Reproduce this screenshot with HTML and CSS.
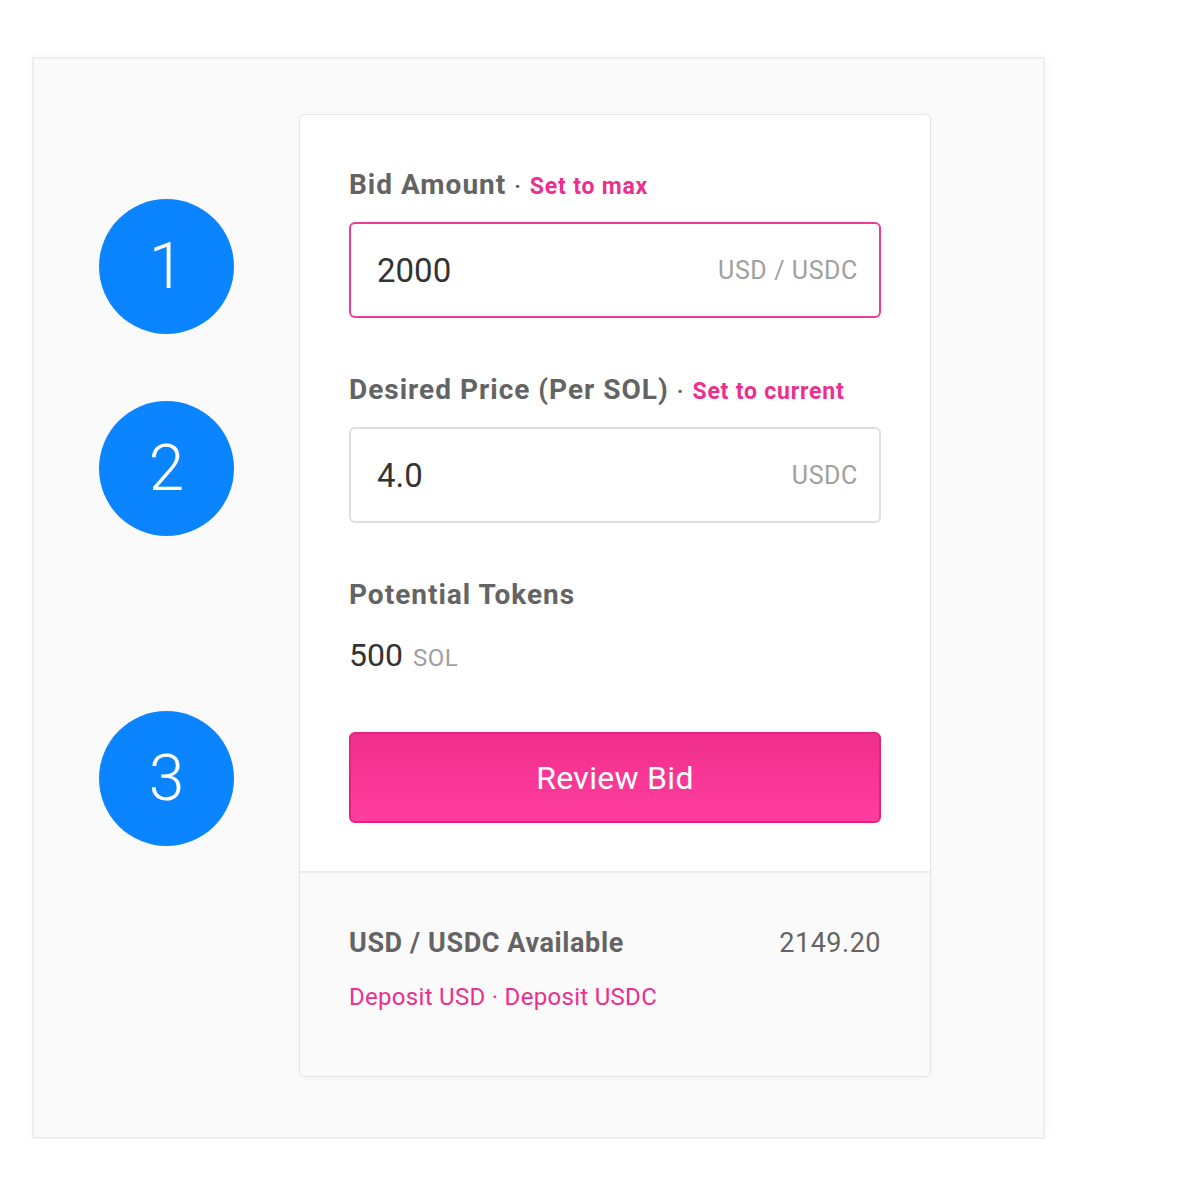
FILE: index.html
```html
<!DOCTYPE html>
<html lang="en">
<head>
    <meta charset="UTF-8">
    <title>Review Bid</title>
    <link rel="stylesheet" href="styles.css">
</head>
<body>
    <div class="frame">
        <div class="steps">
            <div class="step step-1">1</div>
            <div class="step step-2">2</div>
            <div class="step step-3">3</div>
        </div>
        <div class="card">
            <div class="card-body">
                <div class="field">
                    <div class="label">Bid Amount <span class="dot">·</span> <a class="link" href="#">Set to max</a></div>
                    <div class="input active">
                        <span class="value">2000</span>
                        <span class="unit">USD / USDC</span>
                    </div>
                </div>
                <div class="field">
                    <div class="label">Desired Price (Per SOL) <span class="dot">·</span> <a class="link" href="#">Set to current</a></div>
                    <div class="input">
                        <span class="value">4.0</span>
                        <span class="unit">USDC</span>
                    </div>
                </div>
                <div class="field">
                    <div class="label">Potential Tokens</div>
                    <div class="tokens">500 <span class="tokens-unit">SOL</span></div>
                </div>
                <button type="button" class="review">Review Bid</button>
            </div>
            <div class="card-footer">
                <div class="balance">
                    <span class="balance-label">USD / USDC Available</span>
                    <span class="balance-value">2149.20</span>
                </div>
                <div class="deposit">
                    <a href="#">Deposit USD</a> · <a href="#">Deposit USDC</a>
                </div>
            </div>
        </div>
    </div>
</body>
</html>
```

FILE: styles.css
```css
body {
    font-family: Roboto, "Liberation Sans", sans-serif;
    margin: 0;
    padding: 0;
    background: #fff;
}

.frame {
    display: flex;
    align-items: flex-start;
    width: 1013px;
    margin: 57px 0 0 32px;
    padding: 55px 112px 60px 65px;
    box-sizing: border-box;
    background: #fafafa;
    border: 2px solid #eeeeee;
    box-shadow: 0 0 12px rgba(0,0,0,0.04);
}

.steps {
    display: flex;
    flex-direction: column;
    width: 135px;
    margin-right: 65px;
}

.step {
    width: 135px;
    height: 135px;
    border-radius: 50%;
    background: #0a84ff;
    color: #fff;
    font-size: 64px;
    font-weight: 300;
    display: flex;
    align-items: center;
    justify-content: center;
}

.step-1 {
    margin-top: 85px;
}

.step-2 {
    margin-top: 67px;
}

.step-3 {
    margin-top: 175px;
}

.card {
    width: 632px;
    background: #fff;
    border: 1px solid #e6e6ea;
    border-radius: 6px;
    box-sizing: border-box;
    overflow: hidden;
    box-shadow: 0 1px 4px rgba(0,0,0,0.04);
}

.card-body {
    display: flex;
    flex-direction: column;
    padding: 54px 49px 48px;
}

.field {
    margin-bottom: 56px;
}

.label {
    height: 32px;
    font-size: 28px;
    line-height: 32px;
    font-weight: 700;
    letter-spacing: 1px;
    color: #646464;
    margin-bottom: 21px;
    white-space: nowrap;
}

.dot {
    font-size: 22px;
    line-height: 1;
}

.link {
    font-size: 23px;
    line-height: 1;
    font-weight: 700;
    letter-spacing: 0.8px;
    color: #ec2f8f;
    text-decoration: none;
}

.input {
    display: flex;
    align-items: center;
    justify-content: space-between;
    height: 96px;
    padding: 0 21px 0 26px;
    border: 2px solid #dedee3;
    border-radius: 6px;
    box-sizing: border-box;
}

.input.active {
    border-color: #ec3c95;
}

.value {
    font-size: 33px;
    color: #333;
}

.unit {
    font-size: 25px;
    letter-spacing: 0.6px;
    color: #a0a0a0;
}

.tokens {
    height: 36px;
    font-size: 32px;
    color: #333;
    line-height: 36px;
    margin-top: 26px;
}

.tokens-unit {
    font-size: 24px;
    line-height: 1;
    letter-spacing: 0.5px;
    color: #a0a0a0;
    margin-left: 2px;
}

.review {
    display: block;
    width: 100%;
    height: 91px;
    margin-top: 3px;
    border: 2px solid #e5237f;
    border-radius: 6px;
    background: linear-gradient(to bottom, #ef2f8c, #ff3d9e);
    color: #fff;
    font-family: inherit;
    font-size: 32px;
    letter-spacing: 0.3px;
    cursor: pointer;
}

.card-footer {
    background: #fafafa;
    border-top: 2px solid #ececef;
    padding: 54px 49px 65px;
}

.balance {
    display: flex;
    justify-content: space-between;
    font-size: 27px;
    line-height: 32px;
    color: #646464;
}

.balance-label {
    font-weight: 700;
    letter-spacing: 0.6px;
}

.balance-value {
    letter-spacing: 0.5px;
}

.deposit {
    margin-top: 24px;
    font-size: 24px;
    line-height: 28px;
    letter-spacing: 0.3px;
    color: #ec2f8f;
}

.deposit a {
    color: #ec2f8f;
    text-decoration: none;
}
```
